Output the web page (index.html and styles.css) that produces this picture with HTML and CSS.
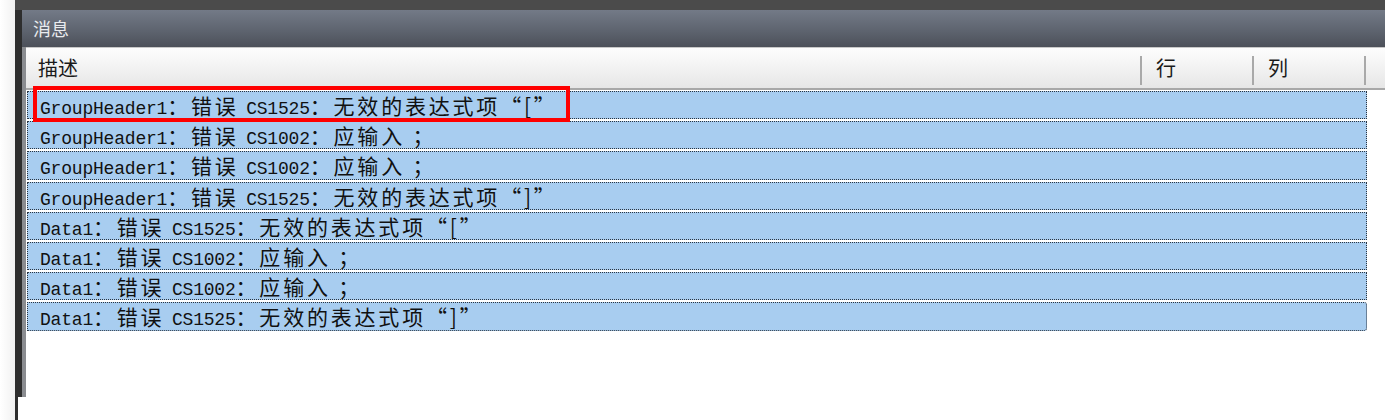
FILE: index.html
```html
<!DOCTYPE html>
<html lang="zh">
<head>
<meta charset="utf-8">
<title>消息</title>
<link rel="stylesheet" href="styles.css">
</head>
<body>
<div class="page">
  <div class="gutter"></div>
  <div class="frame">
    <div class="topband"></div>
    <div class="panel">
      <div class="titlebar">消息</div>
      <div class="listbox">
        <div class="header">
          <div class="col col-desc">描述</div>
          <div class="col col-line">行</div>
          <div class="col col-colm">列</div>
          <div class="col col-rest"></div>
        </div>
        <div class="rows">
          <div class="row"><span class="a">GroupHeader1</span><span class="c">：错误 </span><span class="a">CS1525</span><span class="c">：无效的表达式项“[”</span></div>
          <div class="row"><span class="a">GroupHeader1</span><span class="c">：错误 </span><span class="a">CS1002</span><span class="c">：应输入 ；</span></div>
          <div class="row"><span class="a">GroupHeader1</span><span class="c">：错误 </span><span class="a">CS1002</span><span class="c">：应输入 ；</span></div>
          <div class="row"><span class="a">GroupHeader1</span><span class="c">：错误 </span><span class="a">CS1525</span><span class="c">：无效的表达式项“]”</span></div>
          <div class="row"><span class="a">Data1</span><span class="c">：错误 </span><span class="a">CS1525</span><span class="c">：无效的表达式项“[”</span></div>
          <div class="row"><span class="a">Data1</span><span class="c">：错误 </span><span class="a">CS1002</span><span class="c">：应输入 ；</span></div>
          <div class="row"><span class="a">Data1</span><span class="c">：错误 </span><span class="a">CS1002</span><span class="c">：应输入 ；</span></div>
          <div class="row last"><span class="a">Data1</span><span class="c">：错误 </span><span class="a">CS1525</span><span class="c">：无效的表达式项“]”</span></div>
        </div>
      </div>
      <div class="bottomstrip"></div>
    </div>
  </div>
  <div class="highlight"></div>
</div>
</body>
</html>
```
FILE: styles.css
```css
html, body {
  margin: 0;
  padding: 0;
  background: #ffffff;
}
.page {
  position: relative;
  display: flex;
  width: 1385px;
  height: 420px;
  overflow: hidden;
}
.gutter {
  width: 15px;
  background: linear-gradient(to right, #ffffff, #f1f1f1);
}
.frame {
  flex: 1;
  display: flex;
  flex-direction: column;
  background: #2e2e2e;
  padding-left: 7px;
}
.topband {
  height: 10px;
  background: #4b4b4b;
  margin-left: -7px;
  padding-left: 7px;
}
.panel {
  flex: 1;
  display: flex;
  flex-direction: column;
  background: #ffffff;
}
.titlebar {
  height: 37px;
  box-sizing: border-box;
  padding-left: 11px;
  line-height: 36px;
  font-family: "Noto Sans CJK SC", sans-serif;
  font-size: 18px;
  color: #e9ebee;
  background: linear-gradient(to bottom, #737a87, #5c626d 60%, #4c5059);
}
.listbox {
  flex: 1;
  display: flex;
  flex-direction: column;
  border-left: 4px solid #8a8c90;
  background: #ffffff;
}
.header {
  display: flex;
  height: 43px;
  box-sizing: border-box;
  border-top: 1px solid #c8c8c8;
  border-bottom: 2px solid #a8a8a8;
  background: linear-gradient(to bottom, #fdfdfd, #f2f2f2 50%, #e6e6e6);
  font-family: "Noto Sans CJK SC", sans-serif;
  font-size: 20px;
  color: #1a1a1a;
}
.col {
  box-sizing: border-box;
  line-height: 40px;
  position: relative;
}
.col-desc { width: 1116px; padding-left: 12px; }
.col-line { width: 112px; padding-left: 14px; }
.col-colm { width: 112px; padding-left: 14px; }
.col-rest { flex: 1; }
.col-desc::after, .col-line::after, .col-colm::after {
  content: "";
  position: absolute;
  right: 0;
  top: 8px;
  bottom: 3px;
  width: 2px;
  background: #a9a9a9;
}
.rows {
  display: flex;
  flex-direction: column;
  gap: 2px;
  padding-top: 1px;
  width: 1340px;
  padding-left: 1px;
}
.row {
  height: 28.2px;
  box-sizing: border-box;
  border: 1px dotted #2a3440;
  background: #a8cdf0;
  padding-left: 12px;
  line-height: 26px;
  color: #111;
  white-space: nowrap;
}
.row.last { border-radius: 0 3px 3px 0; }
.a {
  font-family: "Liberation Mono", monospace;
  font-size: 18px;
  letter-spacing: -0.2px;
}
.c {
  font-family: "Noto Sans CJK SC", sans-serif;
  font-size: 21px;
  letter-spacing: 2.8px;
}
.bottomstrip {
  height: 23px;
  background: #ffffff;
  margin-left: -4px;
}
.highlight {
  position: absolute;
  left: 33px;
  top: 86px;
  width: 537px;
  height: 36px;
  box-sizing: border-box;
  border: 4px solid #ff0000;
}
```
